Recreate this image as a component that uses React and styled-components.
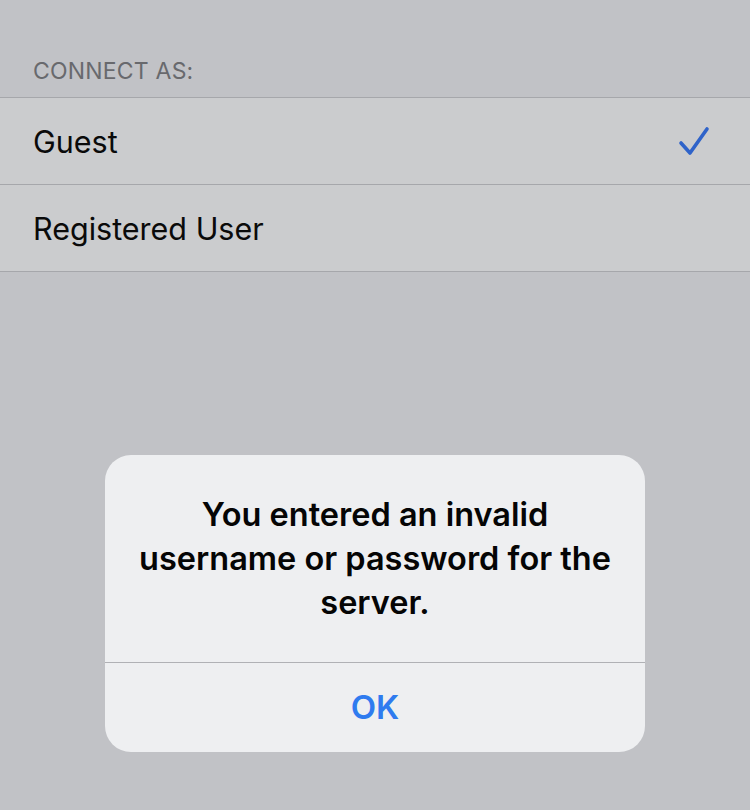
import React from "react";
import styled, { createGlobalStyle } from "styled-components";

const Global = createGlobalStyle`
  html, body { margin: 0; padding: 0; }
  body { background: #c1c2c6; font-family: Inter, "Liberation Sans", sans-serif; }
`;

const Screen = styled.div`
  width: 750px;
  height: 810px;
  background: #c1c2c6;
  position: relative;
  overflow: hidden;
  display: flex;
  flex-direction: column;
`;

const SectionHeader = styled.div`
  height: 97px;
  box-sizing: border-box;
  padding: 57px 33px 0;
  font-size: 23px;
  letter-spacing: 0.2px;
  color: #68696d;
  text-transform: uppercase;
  line-height: 28px;
`;

const List = styled.div`
  border-top: 1px solid #a6a7ab;
  background: #cbccce;
`;

const Row = styled.div`
  height: 87px;
  box-sizing: border-box;
  display: flex;
  align-items: center;
  justify-content: space-between;
  padding: 0 40px 0 33px;
  border-bottom: 1px solid #a6a7ab;
  font-size: 30.5px;
  color: #0a0a0a;
`;

const Check = styled.svg`
  width: 32px;
  height: 30px;
`;

const Overlay = styled.div`
  position: absolute;
  inset: 0;
  display: flex;
  justify-content: center;
  padding-top: 455px;
  box-sizing: border-box;
`;

const Alert = styled.div`
  width: 540px;
  height: 297px;
  background: #eeeff1;
  border-radius: 26px;
  display: flex;
  flex-direction: column;
  overflow: hidden;
`;

const Message = styled.div`
  height: 208px;
  box-sizing: border-box;
  padding: 38px 10px 0;
  text-align: center;
  font-size: 32.5px;
  font-weight: 600;
  line-height: 44px;
  color: #050505;
  border-bottom: 1px solid #b0b1b5;
`;

const Button = styled.div`
  flex: 1;
  display: flex;
  align-items: center;
  justify-content: center;
  font-size: 33px;
  font-weight: 600;
  color: #2f7bef;
  padding-bottom: 2px;
`;

export default function App() {
  return (
    <Screen>
      <Global />
      <SectionHeader>Connect as:</SectionHeader>
      <List>
        <Row>
          Guest
          <Check viewBox="0 0 32 30">
            <path d="M3 17 L12 27 L29 3" fill="none" stroke="#2f63c9" strokeWidth="3.6" strokeLinecap="round" strokeLinejoin="round" />
          </Check>
        </Row>
        <Row>Registered User</Row>
      </List>
      <Overlay>
        <Alert>
          <Message>
            You entered an invalid
            <br />
            username or password for the
            <br />
            server.
          </Message>
          <Button>OK</Button>
        </Alert>
      </Overlay>
    </Screen>
  );
}
